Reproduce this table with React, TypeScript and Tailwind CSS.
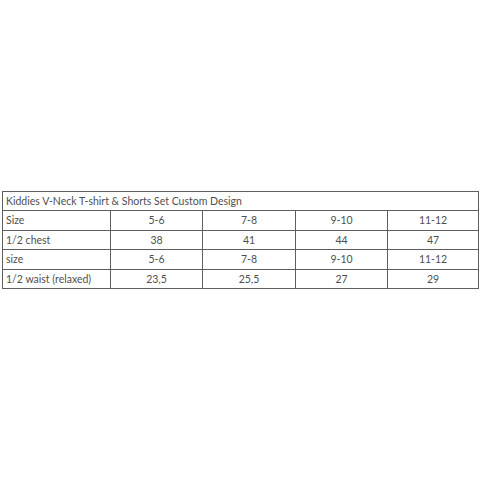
const rows: string[][] = [
  ["Size", "5-6", "7-8", "9-10", "11-12"],
  ["1/2 chest", "38", "41", "44", "47"],
  ["size", "5-6", "7-8", "9-10", "11-12"],
  ["1/2 waist (relaxed)", "23,5", "25,5", "27", "29"],
];

export default function App() {
  return (
    <div className="flex h-[480px] w-[480px] items-center bg-white pl-[2px] font-['Lato',sans-serif] text-[10.5px] text-[#4f4f4f]">
      <table className="w-[476px] table-fixed border-collapse">
        <colgroup>
          <col className="w-[108px]" />
          <col className="w-[92px]" />
          <col className="w-[93px]" />
          <col className="w-[92px]" />
          <col className="w-[91px]" />
        </colgroup>
        <tbody>
          <tr className="h-[19px]">
            <td colSpan={5} className="border border-[#5e5e5e] px-[3px] leading-none">
              Kiddies V-Neck T-shirt &amp; Shorts Set Custom Design
            </td>
          </tr>
          {rows.map((r, i) => (
            <tr key={i} className="h-[19.5px]">
              {r.map((c, j) => (
                <td
                  key={j}
                  className={`border border-[#5e5e5e] leading-none ${j === 0 ? "px-[3px] text-left" : "text-center"}`}
                >
                  {c}
                </td>
              ))}
            </tr>
          ))}
        </tbody>
      </table>
    </div>
  );
}
